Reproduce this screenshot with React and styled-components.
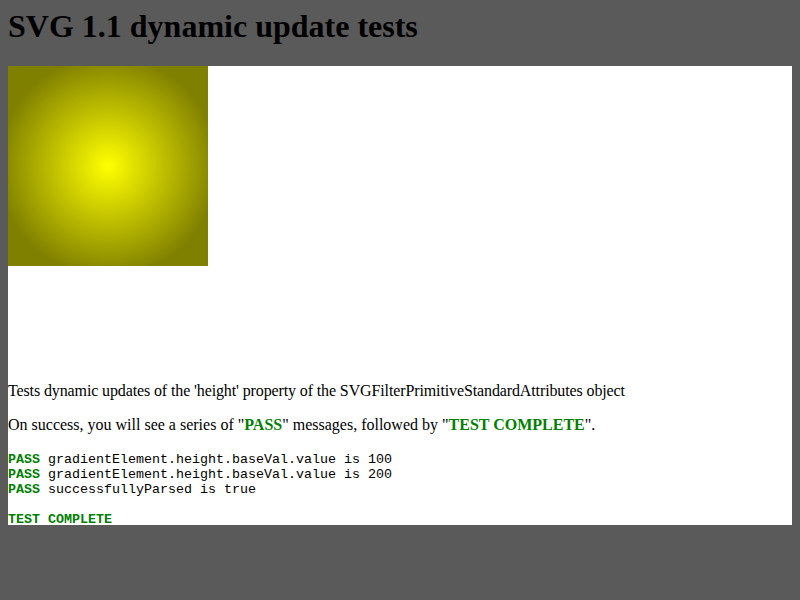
import React from "react"
import styled, { createGlobalStyle } from "styled-components"

const Global = createGlobalStyle`
  html, body {
    background: #5a5a5a;
  }
  body {
    margin: 8px;
    font-family: "Liberation Serif", "Times New Roman", serif;
    font-size: 16px;
    color: #000;
  }
`

const Title = styled.h1`
  margin: 0 0 0.67em;
  font-size: 32px;
  font-weight: bold;
  line-height: 37px;
`

const Panel = styled.div`
  background: #fff;
`

const Drawing = styled.svg`
  display: block;
  width: 784px;
  height: 300px;
`

const Description = styled.p`
  margin: 16px 0;
  line-height: 18px;
  letter-spacing: ${(p) => (p.$tight ? "-0.12px" : "0")};
`

const Pass = styled.span`
  color: #008000;
  font-weight: bold;
`

const Console = styled.div`
  padding-top: 2px;
  font-family: "Liberation Mono", "Courier New", monospace;
  font-size: 13.33px;
  line-height: 15px;
  white-space: pre;
`

const Line = styled.div`
  height: ${(p) => (p.$last ? "13px" : "15px")};
`

const results = [
  "gradientElement.height.baseVal.value is 100",
  "gradientElement.height.baseVal.value is 200",
  "successfullyParsed is true",
]

const App = () => {
  return (
    <>
      <Global />
      <Title>SVG 1.1 dynamic update tests</Title>
      <Panel>
        <Drawing viewBox="0 0 784 300">
          <defs>
            <radialGradient id="grad" cx="50%" cy="50%" r="55%">
              <stop offset="0%" stopColor="#ffff00" />
              <stop offset="100%" stopColor="#808000" />
            </radialGradient>
          </defs>
          <rect x="0" y="0" width="200" height="200" fill="url(#grad)" />
        </Drawing>
        <Description $tight>
          Tests dynamic updates of the 'height' property of the SVGFilterPrimitiveStandardAttributes object
        </Description>
        <Description>
          On success, you will see a series of "<Pass>PASS</Pass>" messages, followed by "<Pass>TEST COMPLETE</Pass>".
        </Description>
        <Console>
          {results.map((r) => (
            <Line key={r}>
              <Pass>PASS</Pass> {r}
            </Line>
          ))}
          <Line />
          <Line $last>
            <Pass>TEST COMPLETE</Pass>
          </Line>
        </Console>
      </Panel>
    </>
  )
}

export default App
